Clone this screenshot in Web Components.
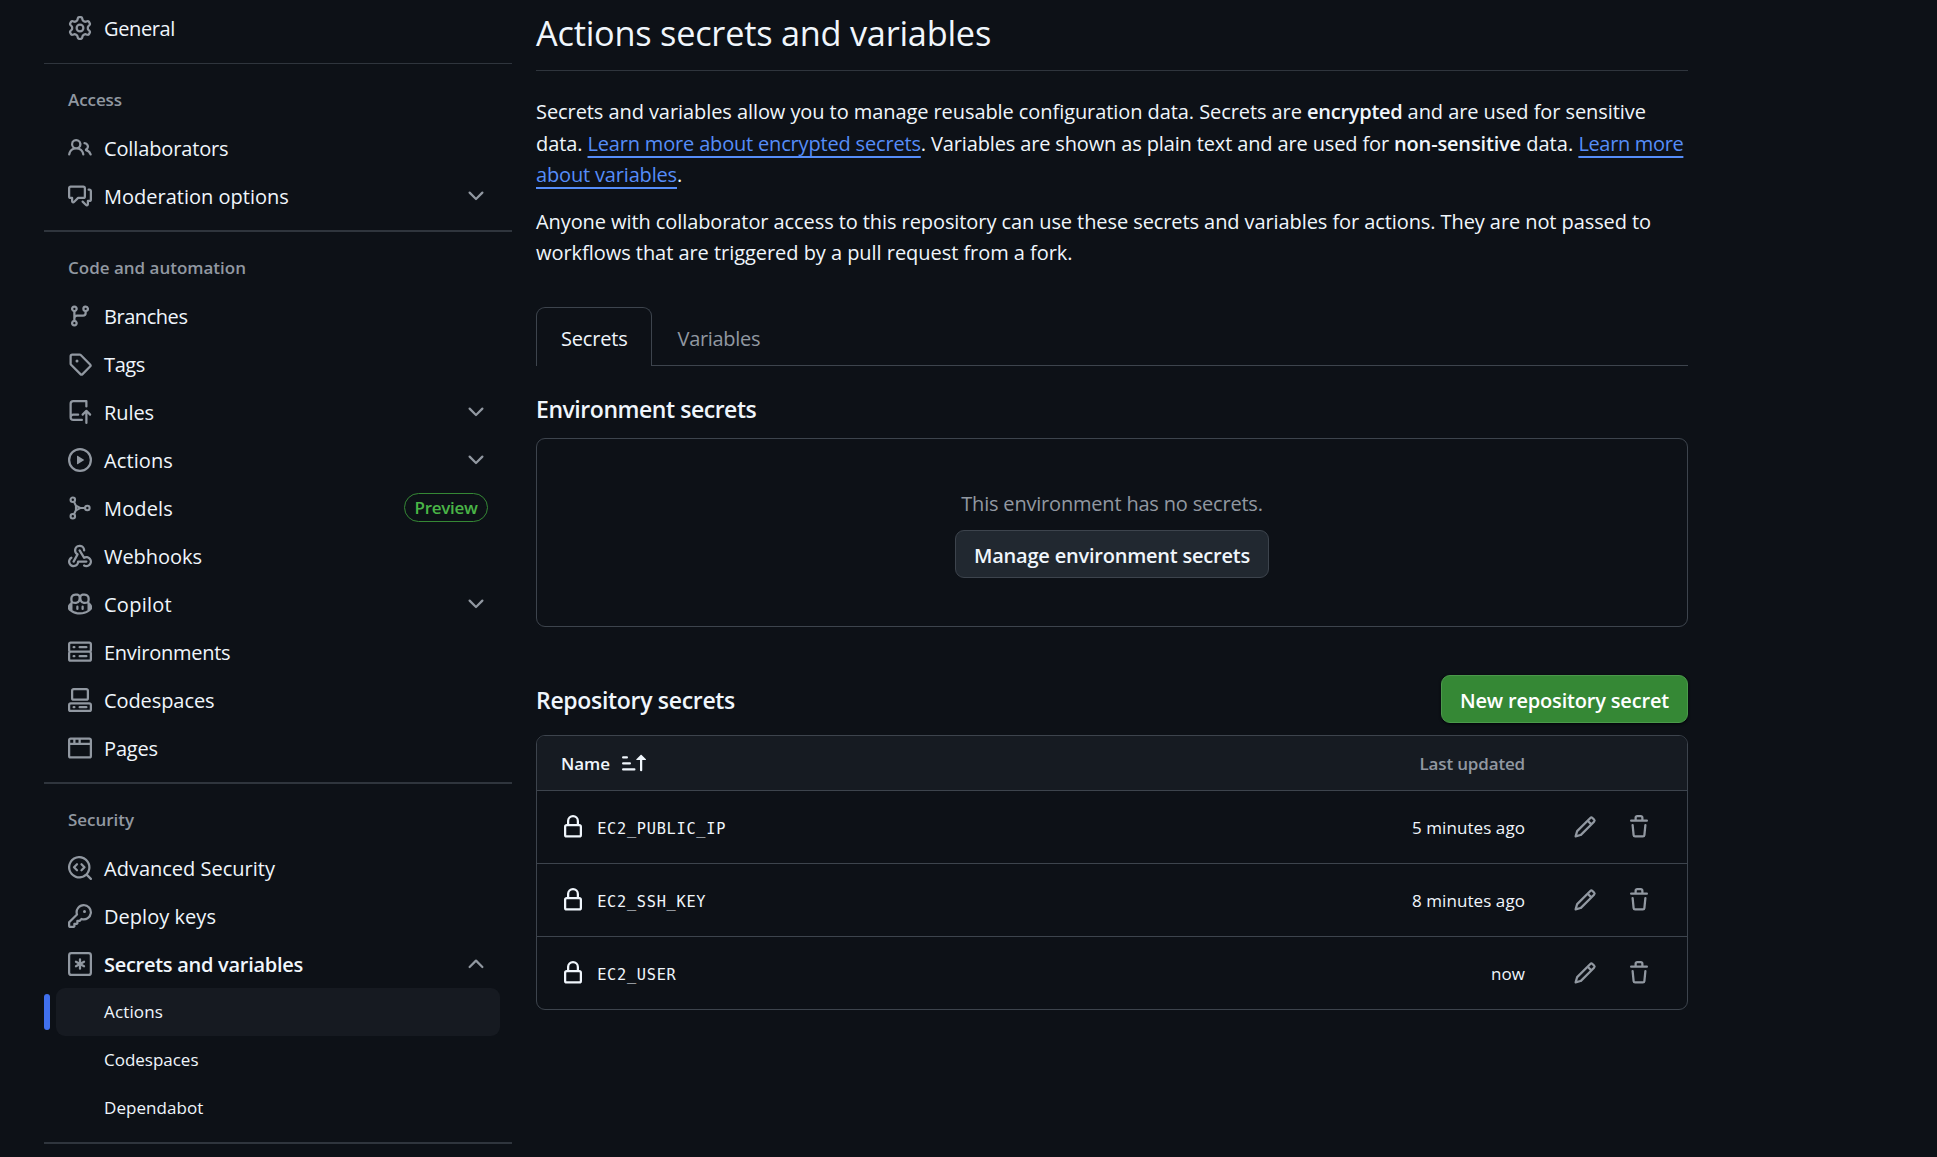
<!DOCTYPE html>
<html lang="en">
<head>
<meta charset="utf-8">
<title>Actions secrets and variables</title>
<style>
html,body{margin:0;background:#0d1117;}
body{width:1937px;height:1157px;overflow:hidden;
--fg:#f0f6fc;--muted:#9198a1;--border:#3d444d;--rule:#2f353d;--link:#568df9;--accent:#4070ee;--ok:#4ab547;
font-family:"Open Sans","Noto Sans",sans-serif;color:var(--fg);font-size:20px;}
</style>
</head>
<body>
<settings-page></settings-page>
<script>
const ICONS={
gear:'<path d="M8 0a8.2 8.2 0 0 1 .701.031C9.444.095 9.99.645 10.16 1.29l.288 1.107c.018.066.079.158.212.224.231.114.454.243.668.386.123.082.233.09.299.071l1.103-.303c.644-.176 1.392.021 1.82.63.27.385.506.792.704 1.218.315.675.111 1.422-.364 1.891l-.814.806c-.049.048-.098.147-.088.294.016.257.016.515 0 .772-.01.147.038.246.088.294l.814.806c.475.469.679 1.216.364 1.891a7.977 7.977 0 0 1-.704 1.217c-.428.61-1.176.807-1.82.63l-1.102-.302c-.067-.019-.177-.011-.3.071a5.909 5.909 0 0 1-.668.386c-.133.066-.194.158-.211.224l-.29 1.106c-.168.646-.715 1.196-1.458 1.26a8.006 8.006 0 0 1-1.402 0c-.743-.064-1.289-.614-1.458-1.26l-.289-1.106c-.018-.066-.079-.158-.212-.224a5.738 5.738 0 0 1-.668-.386c-.123-.082-.233-.09-.299-.071l-1.103.303c-.644.176-1.392-.021-1.82-.63a8.12 8.12 0 0 1-.704-1.218c-.315-.675-.111-1.422.363-1.891l.815-.806c.05-.048.098-.147.088-.294a6.214 6.214 0 0 1 0-.772c.01-.147-.038-.246-.088-.294l-.815-.806C.635 6.045.431 5.298.746 4.623a7.92 7.92 0 0 1 .704-1.217c.428-.61 1.176-.807 1.82-.63l1.102.302c.067.019.177.011.3-.071.214-.143.437-.272.668-.386.133-.066.194-.158.211-.224l.29-1.106C6.009.645 6.556.095 7.299.03 7.53.01 7.764 0 8 0Zm-.571 1.525c-.036.003-.108.036-.137.146l-.289 1.105c-.147.561-.549.967-.998 1.189-.173.086-.34.183-.5.29-.417.278-.97.423-1.529.27l-1.103-.303c-.109-.03-.175.016-.195.045-.22.312-.412.644-.573.99-.014.031-.021.11.059.19l.815.806c.411.406.562.957.53 1.456a4.709 4.709 0 0 0 0 .582c.032.499-.119 1.05-.53 1.456l-.815.806c-.081.08-.073.159-.059.19.162.346.353.677.573.989.02.03.085.076.195.046l1.102-.303c.56-.153 1.113-.008 1.53.27.161.107.328.204.501.29.447.222.85.629.997 1.189l.289 1.105c.029.109.101.143.137.146a6.6 6.6 0 0 0 1.142 0c.036-.003.108-.036.137-.146l.289-1.105c.147-.561.549-.967.998-1.189.173-.086.34-.183.5-.29.417-.278.97-.423 1.529-.27l1.103.303c.109.029.175-.016.195-.045.22-.313.411-.644.573-.99.014-.031.021-.11-.059-.19l-.815-.806c-.411-.406-.562-.957-.53-1.456a4.709 4.709 0 0 0 0-.582c-.032-.499.119-1.05.53-1.456l.815-.806c.081-.08.073-.159.059-.19a6.464 6.464 0 0 0-.573-.989c-.02-.03-.085-.076-.195-.046l-1.102.303c-.56.153-1.113.008-1.53-.27a4.44 4.44 0 0 0-.501-.29c-.447-.222-.85-.629-.997-1.189l-.289-1.105c-.029-.11-.101-.143-.137-.146a6.6 6.6 0 0 0-1.142 0ZM11 8a3 3 0 1 1-6 0 3 3 0 0 1 6 0ZM9.5 8a1.5 1.5 0 1 0-3.001.001A1.5 1.5 0 0 0 9.5 8Z"/>',
people:'<path d="M2 5.5a3.5 3.5 0 1 1 5.898 2.549 5.508 5.508 0 0 1 3.034 4.084.75.75 0 1 1-1.482.235 4 4 0 0 0-7.9 0 .75.75 0 0 1-1.482-.236A5.507 5.507 0 0 1 3.102 8.05 3.493 3.493 0 0 1 2 5.5ZM11 4a3.001 3.001 0 0 1 2.22 5.018 5.01 5.01 0 0 1 2.56 3.012.749.749 0 0 1-.885.954.752.752 0 0 1-.549-.514 3.507 3.507 0 0 0-2.522-2.372.75.75 0 0 1-.574-.73v-.352a.75.75 0 0 1 .416-.672A1.5 1.5 0 0 0 11 5.5.75.75 0 0 1 11 4Zm-5.5-.5a2 2 0 1 0-.001 3.999A2 2 0 0 0 5.5 3.5Z"/>',
discussion:'<path d="M1.75 1h8.5c.966 0 1.75.784 1.75 1.75v5.5A1.75 1.75 0 0 1 10.25 10H7.061l-2.574 2.573A1.458 1.458 0 0 1 2 11.543V10h-.25A1.75 1.75 0 0 1 0 8.25v-5.5C0 1.784.784 1 1.75 1ZM1.5 2.75v5.5c0 .138.112.25.25.25h1a.75.75 0 0 1 .75.75v2.19l2.72-2.72a.749.749 0 0 1 .53-.22h3.5a.25.25 0 0 0 .25-.25v-5.5a.25.25 0 0 0-.25-.25h-8.5a.25.25 0 0 0-.25.25Zm13 2a.25.25 0 0 0-.25-.25h-.5a.75.75 0 0 1 0-1.5h.5c.966 0 1.75.784 1.75 1.75v5.5A1.75 1.75 0 0 1 14.25 12H14v1.543a1.458 1.458 0 0 1-2.487 1.03L9.22 12.28a.749.749 0 0 1 .326-1.275.749.749 0 0 1 .734.215l2.22 2.22v-2.19a.75.75 0 0 1 .75-.75h1a.25.25 0 0 0 .25-.25Z"/>',
branch:'<path d="M9.5 3.25a2.25 2.25 0 1 1 3 2.122V6A2.5 2.5 0 0 1 10 8.5H6a1 1 0 0 0-1 1v1.128a2.251 2.251 0 1 1-1.5 0V5.372a2.25 2.25 0 1 1 1.5 0v1.836A2.493 2.493 0 0 1 6 7h4a1 1 0 0 0 1-1v-.628A2.25 2.25 0 0 1 9.5 3.25Zm-6 0a.75.75 0 1 0 1.5 0 .75.75 0 0 0-1.5 0Zm8.25-.75a.75.75 0 1 0 0 1.5.75.75 0 0 0 0-1.5ZM4.25 12a.75.75 0 1 0 0 1.5.75.75 0 0 0 0-1.5Z"/>',
tag:'<path d="M1 7.775V2.75C1 1.784 1.784 1 2.75 1h5.025c.464 0 .91.184 1.238.513l6.25 6.25a1.75 1.75 0 0 1 0 2.474l-5.026 5.026a1.75 1.75 0 0 1-2.474 0l-6.25-6.25A1.752 1.752 0 0 1 1 7.775Zm1.5 0c0 .066.026.13.073.177l6.25 6.25a.25.25 0 0 0 .354 0l5.025-5.025a.25.25 0 0 0 0-.354l-6.25-6.25a.25.25 0 0 0-.177-.073H2.75a.25.25 0 0 0-.25.25ZM6 5a1 1 0 1 1 0 2 1 1 0 0 1 0-2Z"/>',
rules:'<path d="M1 2.5A2.5 2.5 0 0 1 3.5 0h8.75a.75.75 0 0 1 .75.75v3.5a.75.75 0 0 1-1.5 0V1.5h-8a1 1 0 0 0-1 1v6.708A2.493 2.493 0 0 1 3.5 9h3.25a.75.75 0 0 1 0 1.5H3.5a1 1 0 0 0 0 2h5.75a.75.75 0 0 1 0 1.5H3.5A2.5 2.5 0 0 1 1 11.5Zm13.23 7.79h-.001l-1.224-1.224v6.184a.75.75 0 0 1-1.5 0V9.066L10.28 10.29a.75.75 0 0 1-1.06-1.061l2.505-2.504a.75.75 0 0 1 1.06 0L15.29 9.23a.751.751 0 0 1-.018 1.042.751.751 0 0 1-1.042.018Z"/>',
play:'<path d="M8 0a8 8 0 1 1 0 16A8 8 0 0 1 8 0ZM1.5 8a6.5 6.5 0 1 0 13 0 6.5 6.5 0 0 0-13 0Zm4.879-2.773 4.264 2.559a.25.25 0 0 1 0 .428l-4.264 2.559A.25.25 0 0 1 6 10.559V5.442a.25.25 0 0 1 .379-.215Z"/>',
model:'<g fill="none" stroke="currentColor" stroke-width="1.4" stroke-linejoin="round"><circle cx="3.2" cy="2.5" r="1.5"/><circle cx="3.2" cy="13.5" r="1.5"/><circle cx="12.9" cy="8" r="1.5"/><path d="M5.3 6.4 8.1 8 5.3 9.6ZM4 3.9l1.3 2.6M4 12.1l1.3-2.6M8 8h3.4"/></g>',
webhook:'<path d="M5.5 4.25a2.25 2.25 0 0 1 4.5 0 .75.75 0 0 0 1.5 0 3.75 3.75 0 1 0-6.14 2.889l-2.272 4.258a.75.75 0 0 0 1.324.706L7 7.25a.75.75 0 0 0-.309-1.015A2.25 2.25 0 0 1 5.5 4.25Z"/><path d="M7.364 3.607a.75.75 0 0 1 1.03.257l2.608 4.349a3.75 3.75 0 1 1-.628 6.785.75.75 0 0 1 .752-1.299 2.25 2.25 0 1 0-.033-3.88.75.75 0 0 1-1.03-.256L7.107 4.636a.75.75 0 0 1 .257-1.03Z"/><path d="M2.9 8.776A.75.75 0 0 1 2.625 9.8 2.25 2.25 0 1 0 6 11.75a.75.75 0 0 1 .75-.751h5.5a.75.75 0 0 1 0 1.5H7.425a3.751 3.751 0 1 1-5.55-3.998.75.75 0 0 1 1.024.274Z"/>',
copilot:'<path d="M7.998 15.035c-4.562 0-7.873-2.914-7.998-3.749V9.338c.085-.628.677-1.686 1.588-2.065.013-.07.024-.143.036-.218.029-.183.06-.384.126-.612-.201-.508-.254-1.084-.254-1.656 0-.87.128-1.769.693-2.484.579-.733 1.494-1.124 2.724-1.261 1.206-.134 2.262.034 2.944.765.05.053.096.108.139.165.044-.057.094-.112.143-.165.682-.731 1.738-.899 2.944-.765 1.23.137 2.145.528 2.724 1.261.566.715.693 1.614.693 2.484 0 .572-.053 1.148-.254 1.656.066.228.098.429.126.612.012.076.024.148.037.218.924.385 1.522 1.471 1.591 2.095v1.872c0 .766-3.351 3.795-8.002 3.795Zm0-1.485c2.28 0 4.584-1.11 5.002-1.433V7.862l-.023-.116c-.49.21-1.075.291-1.727.291-1.146 0-2.059-.327-2.71-.991A3.222 3.222 0 0 1 8 6.303a3.24 3.24 0 0 1-.544.743c-.65.664-1.563.991-2.71.991-.652 0-1.236-.081-1.727-.291l-.023.116v4.255c.419.323 2.722 1.433 5.002 1.433ZM6.762 2.83c-.193-.206-.637-.413-1.682-.297-1.019.113-1.479.404-1.713.7-.247.312-.369.789-.369 1.554 0 .793.129 1.171.308 1.371.162.181.519.379 1.442.379.853 0 1.339-.235 1.638-.54.315-.322.527-.827.617-1.553.117-.935-.037-1.395-.241-1.614Zm4.155-.297c-1.044-.116-1.488.091-1.681.297-.204.219-.359.679-.242 1.614.091.726.303 1.231.618 1.553.299.305.784.54 1.638.54.922 0 1.28-.198 1.442-.379.179-.2.308-.578.308-1.371 0-.765-.123-1.242-.37-1.554-.233-.296-.693-.587-1.713-.7Z"/><path d="M6.25 9.037a.75.75 0 0 1 .75.75v1.501a.75.75 0 0 1-1.5 0V9.787a.75.75 0 0 1 .75-.75Zm4.25.75v1.501a.75.75 0 0 1-1.5 0V9.787a.75.75 0 0 1 1.5 0Z"/>',
server:'<path d="M1.75 1h12.5c.966 0 1.75.784 1.75 1.75v4c0 .372-.116.717-.314 1 .198.283.314.628.314 1v4a1.75 1.75 0 0 1-1.75 1.75H1.75A1.75 1.75 0 0 1 0 12.75v-4c0-.358.109-.707.314-1a1.739 1.739 0 0 1-.314-1v-4C0 1.784.784 1 1.75 1ZM1.5 2.75v4c0 .138.112.25.25.25h12.5a.25.25 0 0 0 .25-.25v-4a.25.25 0 0 0-.25-.25H1.75a.25.25 0 0 0-.25.25Zm.25 5.75a.25.25 0 0 0-.25.25v4c0 .138.112.25.25.25h12.5a.25.25 0 0 0 .25-.25v-4a.25.25 0 0 0-.25-.25ZM7 4.75A.75.75 0 0 1 7.75 4h4.5a.75.75 0 0 1 0 1.5h-4.5A.75.75 0 0 1 7 4.75ZM7.75 10h4.5a.75.75 0 0 1 0 1.5h-4.5a.75.75 0 0 1 0-1.5ZM3 4.75A.75.75 0 0 1 3.75 4h.5a.75.75 0 0 1 0 1.5h-.5A.75.75 0 0 1 3 4.75ZM3.75 10h.5a.75.75 0 0 1 0 1.5h-.5a.75.75 0 0 1 0-1.5Z"/>',
codespaces:'<path d="M0 11.25c0-.966.784-1.75 1.75-1.75h12.5c.966 0 1.75.784 1.75 1.75v3A1.75 1.75 0 0 1 14.25 16H1.75A1.75 1.75 0 0 1 0 14.25Zm2-9.5C2 .784 2.784 0 3.75 0h8.5C13.216 0 14 .784 14 1.75v5a1.75 1.75 0 0 1-1.75 1.75h-8.5A1.75 1.75 0 0 1 2 6.75Zm1.75-.25a.25.25 0 0 0-.25.25v5c0 .138.112.25.25.25h8.5a.25.25 0 0 0 .25-.25v-5a.25.25 0 0 0-.25-.25Zm-2 9.5a.25.25 0 0 0-.25.25v3c0 .138.112.25.25.25h12.5a.25.25 0 0 0 .25-.25v-3a.25.25 0 0 0-.25-.25Z"/><path d="M7 12.75a.75.75 0 0 1 .75-.75h4.5a.75.75 0 0 1 0 1.5h-4.5a.75.75 0 0 1-.75-.75Zm-4 0a.75.75 0 0 1 .75-.75h.5a.75.75 0 0 1 0 1.5h-.5a.75.75 0 0 1-.75-.75Z"/>',
browser:'<path d="M0 2.75C0 1.784.784 1 1.75 1h12.5c.966 0 1.75.784 1.75 1.75v10.5A1.75 1.75 0 0 1 14.25 15H1.75A1.75 1.75 0 0 1 0 13.25ZM14.5 6h-13v7.25c0 .138.112.25.25.25h12.5a.25.25 0 0 0 .25-.25Zm-6-3.5v2h6V2.75a.25.25 0 0 0-.25-.25ZM5 2.5v2h2v-2Zm-3.25 0a.25.25 0 0 0-.25.25V4.5h2v-2Z"/>',
codescan:'<path d="M8.47 4.97a.75.75 0 0 0 0 1.06L9.94 7.5 8.47 8.97a.75.75 0 1 0 1.06 1.06l2-2a.75.75 0 0 0 0-1.06l-2-2a.75.75 0 0 0-1.06 0ZM6.53 6.03a.75.75 0 0 0-1.06-1.06l-2 2a.75.75 0 0 0 0 1.06l2 2a.75.75 0 1 0 1.06-1.06L5.06 7.5l1.47-1.47Z"/><path d="M12.246 13.307a7.501 7.501 0 1 1 1.06-1.06l2.474 2.473a.749.749 0 0 1-.326 1.275.749.749 0 0 1-.734-.215ZM1.5 7.5a6.002 6.002 0 0 0 3.608 5.504 6.002 6.002 0 0 0 6.486-1.117.748.748 0 0 1 .292-.293A6 6 0 1 0 1.5 7.5Z"/>',
key:'<path d="M10.5 0a5.499 5.499 0 1 1-1.288 10.848l-.932.932a.749.749 0 0 1-.53.22H7v.75a.749.749 0 0 1-.22.53l-.5.5a.749.749 0 0 1-.53.22H5v.75a.749.749 0 0 1-.22.53l-.5.5a.749.749 0 0 1-.53.22h-2A1.75 1.75 0 0 1 0 14.25v-2c0-.199.079-.389.22-.53l4.932-4.932A5.5 5.5 0 0 1 10.5 0Zm-4 5.5c-.001.431.069.86.205 1.269a.75.75 0 0 1-.181.768L1.5 12.56v1.69c0 .138.112.25.25.25h1.69l.06-.06v-1.19a.75.75 0 0 1 .75-.75h1.19l.06-.06v-1.19a.75.75 0 0 1 .75-.75h1.19l1.023-1.025a.75.75 0 0 1 .768-.18A4 4 0 1 0 6.5 5.5ZM11 6a1 1 0 1 1 0-2 1 1 0 0 1 0 2Z"/>',
asterisk:'<g fill="none" stroke="currentColor" stroke-width="1.5" stroke-linecap="round"><rect x=".75" y=".75" width="14.5" height="14.5" rx="1.5"/><path d="M8 4.9v6.2M5.3 6.5l5.4 3M10.7 6.5l-5.4 3" stroke-width="1.5"/></g>',
lock:'<path d="M4 4a4 4 0 0 1 8 0v2h.25c.966 0 1.75.784 1.75 1.75v5.5A1.75 1.75 0 0 1 12.25 15h-8.5A1.75 1.75 0 0 1 2 13.25v-5.5C2 6.784 2.784 6 3.75 6H4Zm8.25 3.5h-8.5a.25.25 0 0 0-.25.25v5.5c0 .138.112.25.25.25h8.5a.25.25 0 0 0 .25-.25v-5.5a.25.25 0 0 0-.25-.25ZM10.5 6V4a2.5 2.5 0 1 0-5 0v2Z"/>',
pencil:'<path d="M11.013 1.427a1.75 1.75 0 0 1 2.474 0l1.086 1.086a1.75 1.75 0 0 1 0 2.474l-8.61 8.61c-.21.21-.47.364-.756.445l-3.251.93a.75.75 0 0 1-.927-.928l.929-3.25c.081-.286.235-.547.445-.758l8.61-8.61Zm.176 4.823L9.75 4.81l-6.286 6.287a.253.253 0 0 0-.064.108l-.558 1.953 1.953-.558a.253.253 0 0 0 .108-.064Zm1.238-3.763a.25.25 0 0 0-.354 0L10.811 3.75l1.439 1.44 1.263-1.263a.25.25 0 0 0 0-.354Z"/>',
trash:'<path d="M11 1.75V3h2.25a.75.75 0 0 1 0 1.5H2.75a.75.75 0 0 1 0-1.5H5V1.75C5 .784 5.784 0 6.75 0h2.5C10.216 0 11 .784 11 1.75ZM4.496 6.675l.66 6.6a.25.25 0 0 0 .249.225h5.19a.25.25 0 0 0 .249-.225l.66-6.6a.75.75 0 0 1 1.492.149l-.66 6.6A1.748 1.748 0 0 1 10.595 15h-5.19a1.75 1.75 0 0 1-1.741-1.575l-.66-6.6a.75.75 0 1 1 1.492-.15ZM6.5 1.75V3h3V1.75a.25.25 0 0 0-.25-.25h-2.5a.25.25 0 0 0-.25.25Z"/>',
sort:'<path d="m12.927 2.573 3 3A.25.25 0 0 1 15.75 6H13.5v6.75a.75.75 0 0 1-1.5 0V6H9.75a.25.25 0 0 1-.177-.427l3-3a.25.25 0 0 1 .354 0ZM0 12.25a.75.75 0 0 1 .75-.75h7.5a.75.75 0 0 1 0 1.5H.75a.75.75 0 0 1-.75-.75Zm0-4a.75.75 0 0 1 .75-.75h4.5a.75.75 0 0 1 0 1.5H.75A.75.75 0 0 1 0 8.25Zm0-4a.75.75 0 0 1 .75-.75h2.5a.75.75 0 0 1 0 1.5H.75A.75.75 0 0 1 0 4.25Z"/>',
down:'<path d="M12.78 5.22a.749.749 0 0 1 0 1.06l-4.25 4.25a.749.749 0 0 1-1.06 0L3.22 6.28a.749.749 0 1 1 1.06-1.06L8 8.939l3.72-3.719a.749.749 0 0 1 1.06 0Z"/>',
up:'<path d="M3.22 10.53a.749.749 0 0 1 0-1.06l4.25-4.25a.749.749 0 0 1 1.06 0l4.25 4.25a.749.749 0 1 1-1.06 1.06L8 6.811 4.28 10.53a.749.749 0 0 1-1.06 0Z"/>'
};
class Base extends HTMLElement{
  connectedCallback(){ if(!this.shadowRoot){ this.attachShadow({mode:'open'}).innerHTML=this.render(); } this.ready&&this.ready(); }
  at(n){ return this.getAttribute(n)||''; }
}
class SettingsPage extends Base{ render(){ return `
<style>
:host{display:flex;gap:24px;padding-left:44px;height:1157px;overflow:hidden;box-sizing:border-box}
side-nav{width:468px;flex:none}
secrets-panel{width:1152px;flex:none}
</style>
<side-nav></side-nav><secrets-panel></secrets-panel>`; } }

class SideNav extends Base{ render(){ return `
<style>
:host{display:flex;flex-direction:column;padding-top:4px;box-sizing:border-box}
nav-group:first-of-type{--gap:11px;--line:1px}
</style>
<nav-group><nav-item icon="gear" w="71">General</nav-item></nav-group>
<nav-group title-w="54" heading="Access">
<nav-item icon="people" w="124.5">Collaborators</nav-item>
<nav-item icon="discussion" w="184.8" end="down">Moderation options</nav-item>
</nav-group>
<nav-group title-w="178" heading="Code and automation">
<nav-item icon="branch" w="83.5">Branches</nav-item>
<nav-item icon="tag" w="41">Tags</nav-item>
<nav-item icon="rules" w="50" end="down">Rules</nav-item>
<nav-item icon="play" w="69" end="down">Actions</nav-item>
<nav-item icon="model" w="69" end="badge">Models</nav-item>
<nav-item icon="webhook" w="98">Webhooks</nav-item>
<nav-item icon="copilot" w="68" end="down">Copilot</nav-item>
<nav-item icon="server" w="126.3">Environments</nav-item>
<nav-item icon="codespaces" w="110.5">Codespaces</nav-item>
<nav-item icon="browser" w="54">Pages</nav-item>
</nav-group>
<nav-group title-w="66" heading="Security">
<nav-item icon="codescan" w="171">Advanced Security</nav-item>
<nav-item icon="key" w="112">Deploy keys</nav-item>
<nav-item icon="asterisk" w="199" end="up" bold>Secrets and variables</nav-item>
<nav-subitem w="59" active>Actions</nav-subitem>
<nav-subitem w="94.5">Codespaces</nav-subitem>
<nav-subitem w="99.3">Dependabot</nav-subitem>
</nav-group>`; } }

class NavGroup extends Base{ render(){ return `
<style>
:host{display:flex;flex-direction:column;padding-bottom:var(--gap,10px);border-bottom:var(--line,2px) solid var(--rule)}
h3{margin:0;height:60px;box-sizing:border-box;padding:11px 24px 0;line-height:49px;font-size:17px;font-weight:600;color:var(--muted)}
</style>
${this.at('heading')?`<h3><fit-text w="${this.at('title-w')}">${this.at('heading')}</fit-text></h3>`:''}<slot></slot>`; } }

class NavItem extends Base{ render(){ const e=this.at('end'); return `
<style>
:host{display:flex;align-items:center;height:48px;padding:0 24px;box-sizing:border-box;gap:12px}
fit-text{line-height:47px;padding-top:1px}
:host([bold]) fit-text{font-weight:600}
svg-icon{color:var(--muted)}
.end{margin-left:auto}
</style>
<svg-icon name="${this.at('icon')}"></svg-icon><fit-text w="${this.at('w')}">${this.textContent}</fit-text>
${e==='badge'?'<preview-badge class="end">Preview</preview-badge>':e?`<svg-icon class="end" name="${e}"></svg-icon>`:''}`; } }

class NavSubitem extends Base{ render(){ return `
<style>
:host{display:flex;align-items:center;height:48px;line-height:48px;font-size:17px}
i{width:6px;height:36px;border-radius:3px;margin-right:6px}
div{flex:1;height:47px;line-height:47px;padding:0 0 1px 48px;border-radius:9px;margin-right:12px}
:host([active]) i{background:var(--accent)}
:host([active]) div{background:#161a21}
</style>
<i></i><div><fit-text w="${this.at('w')}">${this.textContent}</fit-text></div>`; } }

class PreviewBadge extends Base{ render(){ return `
<style>
:host{display:flex;align-items:center;justify-content:center;width:84px;height:29px;line-height:27px;box-sizing:border-box;border:1px solid #358835;border-radius:15px;color:var(--ok);font-size:17px;font-weight:600;margin-bottom:1px}
</style><fit-text w="63">Preview</fit-text>`; } }

class SvgIcon extends Base{ render(){ return `
<style>:host{display:block;width:24px;height:24px;flex:none}svg{display:block}</style>
<svg width="24" height="24" viewBox="0 0 16 16" fill="currentColor" fill-rule="evenodd" aria-hidden="true">${ICONS[this.at('name')]}</svg>`; } }

class UiButton extends Base{ render(){ return `
<style>
:host{display:block;flex:none;height:48px;box-sizing:border-box;border:1px solid var(--border);border-radius:9px;background:#212830;padding:2px 18px 0;line-height:45px;font-weight:600}
:host([primary]){background:#358835;border-color:#4b9a4b;color:#fff;box-shadow:0 1px 3px #010409}
</style><slot></slot>`; } }

class SecretRow extends Base{ render(){ return `
<style>
:host{display:flex;align-items:center;height:73px;border-top:1px solid var(--border);box-sizing:border-box;padding:0 36px 0 24px}
code{font:15.3px/30px "DejaVu Sans Mono",monospace;margin-left:12.2px;padding-top:4px}
.time{margin-left:auto;margin-right:48px;font-size:17px}
.act{color:var(--muted)}
.act+.act{margin-left:30px}
</style>
<svg-icon name="lock"></svg-icon><code><fit-text w="${this.at('w')}">${this.at('name')}</fit-text></code>
<fit-text class="time" w="${this.at('tw')}">${this.at('time')}</fit-text>
<svg-icon class="act" name="pencil"></svg-icon><svg-icon class="act" name="trash"></svg-icon>`; } }

class SecretsPanel extends Base{ render(){ return `
<style>
:host{display:flex;flex-direction:column}
h1{margin:0;padding:5px 0 10px;line-height:55px;font-size:34.3px;font-weight:400;border-bottom:1px solid var(--rule);height:55px}
.desc{height:236px;box-sizing:border-box;padding-top:25px}
p{margin:0 0 16px;line-height:31px}
.ln{display:flex;height:31px}
.first{margin-bottom:1px}
b{font-weight:600}
a{color:var(--link)}
.tabs{display:flex;height:59px;line-height:61px}
.tab{box-sizing:border-box;width:116px;padding-left:24px;border:1px solid var(--border);border-bottom:0;border-radius:9px 9px 0 0}
.rest{flex:1;border-bottom:1px solid var(--border);padding-left:25.6px;color:var(--muted);line-height:63px;height:58px}
h2{margin:0;font-size:23px;font-weight:600;line-height:58px}
.env{height:72px;box-sizing:border-box;padding-top:14px}
.box{height:189px;box-sizing:border-box;border:1px solid var(--border);border-radius:9px;display:flex;flex-direction:column;align-items:center;gap:11px;padding-top:49px;line-height:31px}
.box span{color:var(--muted)}
.head{display:flex;justify-content:space-between;padding:48px 0 12px;height:48px}
.head h2{line-height:50px}
.table{border:1px solid var(--border);border-radius:9px;overflow:hidden}
.th{display:flex;align-items:center;height:54px;padding:0 162px 0 24px;background:#161b22;font-size:17px;font-weight:600}
.th svg-icon{margin-left:12px}
.th .u{margin-left:auto;color:var(--muted)}
</style>
<h1><fit-text w="455">Actions secrets and variables</fit-text></h1>
<div class="desc">
<p><span class="ln first"><fit-text w="771">Secrets and variables allow you to manage reusable configuration data. Secrets are </fit-text><b><fit-text w="95.5">encrypted</fit-text></b><fit-text w="243.3"> and are used for sensitive</fit-text></span>
<span class="ln"><fit-text w="51.5">data. </fit-text><a><fit-text underline w="333.3">Learn more about encrypted secrets</fit-text></a><fit-text w="473.2">. Variables are shown as plain text and are used for </fit-text><b><fit-text w="127">non-sensitive</fit-text></b><fit-text w="57.4"> data. </fit-text><a><fit-text underline w="105">Learn more</fit-text></a></span>
<span class="ln"><a><fit-text underline w="141">about variables</fit-text></a><fit-text w="5">.</fit-text></span></p>
<p><span class="ln"><fit-text w="1115">Anyone with collaborator access to this repository can use these secrets and variables for actions. They are not passed to</fit-text></span>
<span class="ln"><fit-text w="536.5">workflows that are triggered by a pull request from a fork.</fit-text></span></p>
</div>
<div class="tabs"><div class="tab"><fit-text w="66.5">Secrets</fit-text></div><div class="rest"><fit-text w="82.5">Variables</fit-text></div></div>
<h2 class="env"><fit-text w="220.3">Environment secrets</fit-text></h2>
<div class="box"><span><fit-text w="301.5">This environment has no secrets.</fit-text></span><ui-button><fit-text w="276">Manage environment secrets</fit-text></ui-button></div>
<div class="head"><h2><fit-text w="199">Repository secrets</fit-text></h2><ui-button primary><fit-text w="209">New repository secret</fit-text></ui-button></div>
<div class="table"><div class="th"><fit-text w="49">Name</fit-text><svg-icon name="sort"></svg-icon><fit-text class="u" w="105.5">Last updated</fit-text></div>
<secret-row name="EC2_PUBLIC_IP" w="128.9" time="5 minutes ago" tw="113"></secret-row>
<secret-row name="EC2_SSH_KEY" w="109.1" time="8 minutes ago" tw="113"></secret-row>
<secret-row name="EC2_USER" w="79.3" time="now" tw="34"></secret-row></div>`; } }

/* One run of text tracked to an exact advance width. */
class FitText extends Base{
  render(){ return `<style>:host{display:inline-block;white-space:pre;flex:none}span{display:inline-block}
:host([underline]) span{text-decoration:underline;text-decoration-thickness:2px;text-underline-offset:5px;text-decoration-skip-ink:none}</style><span><slot></slot></span>`; }
  ready(){
    const s=this.shadowRoot.querySelector('span'), w=parseFloat(this.at('w'));
    s.style.letterSpacing='0';
    s.style.letterSpacing=((w-s.getBoundingClientRect().width)/this.textContent.length)+'px';
    this.style.width=w+'px';
  }
}
customElements.define('settings-page',SettingsPage);
customElements.define('side-nav',SideNav);
customElements.define('nav-group',NavGroup);
customElements.define('nav-item',NavItem);
customElements.define('nav-subitem',NavSubitem);
customElements.define('preview-badge',PreviewBadge);
customElements.define('svg-icon',SvgIcon);
customElements.define('ui-button',UiButton);
customElements.define('secrets-panel',SecretsPanel);
customElements.define('secret-row',SecretRow);
customElements.define('fit-text',FitText);
</script>
</body>
</html>
